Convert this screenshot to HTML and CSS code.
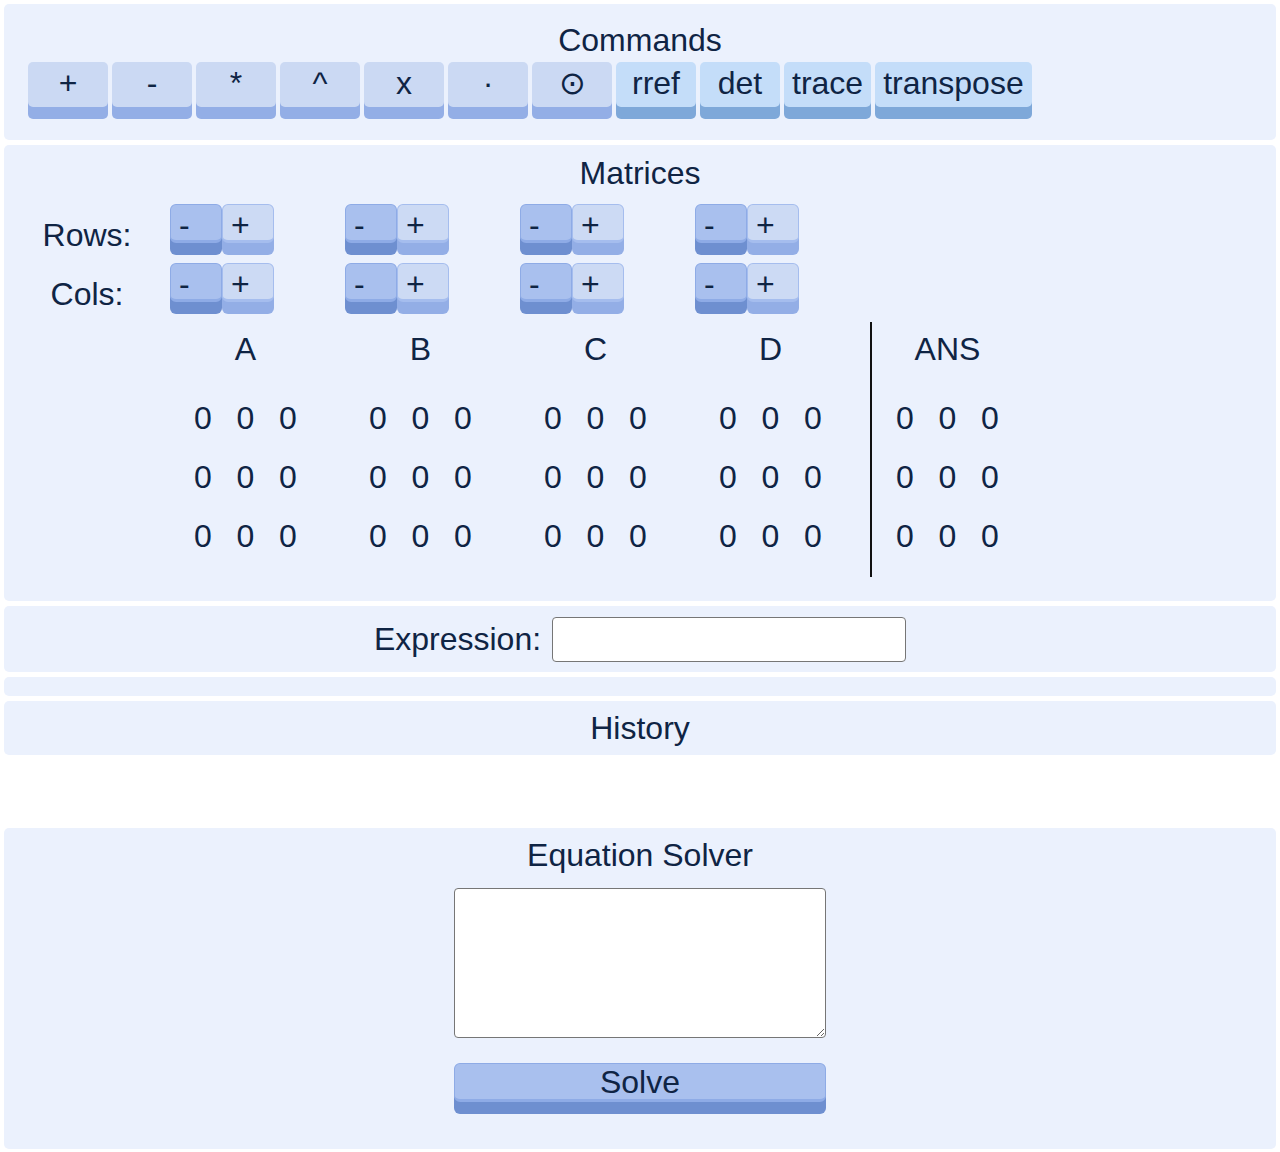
FILE: index.html
```html
<!DOCTYPE html>
<html lang="en">
<head>
<meta charset="utf-8">
<title>Matrix Calculator</title>
<link rel="stylesheet" href="styles.css">
</head>
<body>
<section class="panel commands">
  <h2 class="title">Commands</h2>
  <div class="cmd-row">
    <button class="cmd op">+</button>
    <button class="cmd op">-</button>
    <button class="cmd op">*</button>
    <button class="cmd op">^</button>
    <button class="cmd op">x</button>
    <button class="cmd op">·</button>
    <button class="cmd op">⊙</button>
    <button class="cmd fn">rref</button>
    <button class="cmd fn">det</button>
    <button class="cmd fn">trace</button>
    <button class="cmd fn">transpose</button>
  </div>
</section>

<section class="panel matrices">
  <h2 class="title">Matrices</h2>
  <div class="mat-layout">
    <div class="labels">
      <div class="lbl">Rows:</div>
      <div class="lbl">Cols:</div>
    </div>

    <div class="mcol">
      <div class="pair"><button class="sbtn minus">-</button><button class="sbtn plus">+</button></div>
      <div class="pair"><button class="sbtn minus">-</button><button class="sbtn plus">+</button></div>
      <div class="matrix">
        <div class="mname">A</div>
        <div class="mgrid">
          <span>0</span><span>0</span><span>0</span>
          <span>0</span><span>0</span><span>0</span>
          <span>0</span><span>0</span><span>0</span>
        </div>
      </div>
    </div>

    <div class="mcol">
      <div class="pair"><button class="sbtn minus">-</button><button class="sbtn plus">+</button></div>
      <div class="pair"><button class="sbtn minus">-</button><button class="sbtn plus">+</button></div>
      <div class="matrix">
        <div class="mname">B</div>
        <div class="mgrid">
          <span>0</span><span>0</span><span>0</span>
          <span>0</span><span>0</span><span>0</span>
          <span>0</span><span>0</span><span>0</span>
        </div>
      </div>
    </div>

    <div class="mcol">
      <div class="pair"><button class="sbtn minus">-</button><button class="sbtn plus">+</button></div>
      <div class="pair"><button class="sbtn minus">-</button><button class="sbtn plus">+</button></div>
      <div class="matrix">
        <div class="mname">C</div>
        <div class="mgrid">
          <span>0</span><span>0</span><span>0</span>
          <span>0</span><span>0</span><span>0</span>
          <span>0</span><span>0</span><span>0</span>
        </div>
      </div>
    </div>

    <div class="mcol">
      <div class="pair"><button class="sbtn minus">-</button><button class="sbtn plus">+</button></div>
      <div class="pair"><button class="sbtn minus">-</button><button class="sbtn plus">+</button></div>
      <div class="matrix">
        <div class="mname">D</div>
        <div class="mgrid">
          <span>0</span><span>0</span><span>0</span>
          <span>0</span><span>0</span><span>0</span>
          <span>0</span><span>0</span><span>0</span>
        </div>
      </div>
    </div>

    <div class="anscol">
      <div class="matrix ans">
        <div class="mname">ANS</div>
        <div class="mgrid">
          <span>0</span><span>0</span><span>0</span>
          <span>0</span><span>0</span><span>0</span>
          <span>0</span><span>0</span><span>0</span>
        </div>
      </div>
    </div>
  </div>
</section>

<section class="panel expression">
  <label class="expr-label" for="expr">Expression:</label>
  <input class="expr-input" id="expr" type="text">
</section>

<section class="panel result"></section>

<section class="panel history">
  <h2 class="title">History</h2>
</section>
<div class="history-list"></div>

<section class="panel solver">
  <h2 class="title">Equation Solver</h2>
  <textarea class="solver-input"></textarea>
  <button class="solve-btn">Solve</button>
</section>
</body>
</html>
```

FILE: styles.css
```css
html, body {
  background: #ffffff;
}
body {
  margin: 4px 4px 0;
  font-family: "Liberation Sans", Arial, Helvetica, sans-serif;
  font-size: 32px;
  color: #0f2444;
}
button, input, textarea {
  font-family: inherit;
  font-size: 32px;
  color: inherit;
}
.panel {
  background: #ebf1fd;
  border-radius: 5px;
  margin-bottom: 5px;
  box-sizing: border-box;
}
.title {
  margin: 0;
  font-size: 32px;
  font-weight: normal;
  line-height: 37px;
  text-align: center;
}

/* Commands */
.commands {
  padding: 18px 24px 33px;
}
.cmd-row {
  display: flex;
  gap: 4px;
  margin-top: 3px;
}
.cmd {
  box-sizing: border-box;
  height: 45px;
  min-width: 80px;
  padding: 3px 8px 5px;
  line-height: 37px;
  border: none;
  border-radius: 5px;
  text-align: center;
}
.cmd.op {
  background: #cbd9f3;
  box-shadow: 0 12px 0 #93aee6;
}
.cmd.fn {
  background: #c4ddf9;
  box-shadow: 0 12px 0 #7ea8d9;
}

/* Matrices */
.matrices {
  padding: 9.5px 0 24px;
}
.matrices .title {
  margin-bottom: 12.5px;
}
.mat-layout {
  display: flex;
}
.labels {
  width: 154px;
  box-sizing: border-box;
  padding-left: 12px;
}
.lbl {
  height: 59px;
  box-sizing: border-box;
  padding-top: 4px;
  line-height: 55px;
  text-align: center;
}
.mcol {
  width: 175px;
}
.pair {
  display: flex;
  height: 59px;
  padding-left: 12px;
}
.sbtn {
  box-sizing: border-box;
  width: 52px;
  height: 39px;
  padding: 5px 0 0 8px;
  line-height: 30px;
  text-align: left;
  border: 1px solid;
  border-bottom-width: 3px;
  border-radius: 6px;
}
.sbtn.minus {
  background: #a9c0ee;
  border-color: #8eabe6;
  box-shadow: 0 12px 0 #6e8fd0;
}
.sbtn.plus {
  background: #ccdaf4;
  border-color: #a5bdee;
  box-shadow: 0 12px 0 #93aee6;
}
.matrix {
  height: 255px;
  box-sizing: border-box;
}
.mname {
  height: 54px;
  line-height: 54px;
  text-align: center;
}
.mgrid {
  display: grid;
  grid-template-columns: repeat(3, 42.5px);
  grid-auto-rows: 59px;
  justify-content: center;
  margin-top: 12.5px;
  line-height: 59px;
  text-align: center;
}
.anscol {
  margin-left: 12px;
  padding-top: 118px;
}
.matrix.ans {
  width: 153px;
  border-left: 2px solid #111111;
}

/* Expression */
.expression {
  display: flex;
  justify-content: center;
  align-items: center;
  gap: 11px;
  padding: 11px 0 10px;
}
.expr-label {
  line-height: 37px;
}
.expr-input {
  box-sizing: border-box;
  width: 354px;
  height: 45px;
  margin: 0;
  padding: 0 4px;
  background: #ffffff;
  border: 1px solid #767676;
  border-radius: 4px;
}

.result {
  height: 19px;
}

.history {
  padding: 9px 0 8px;
}
.history-list {
  height: 63px;
  margin-bottom: 5px;
}

/* Solver */
.solver {
  padding: 9px 0 47px;
}
.solver .title {
  margin-bottom: 14px;
}
.solver-input {
  display: block;
  box-sizing: border-box;
  width: 372px;
  height: 150px;
  margin: 0 auto;
  background: #ffffff;
  border: 1px solid #767676;
  border-radius: 4px;
}
.solve-btn {
  display: block;
  box-sizing: border-box;
  width: 372px;
  height: 39px;
  margin: 25px auto 0;
  padding: 2px 0 1px;
  line-height: 32px;
  text-align: center;
  background: #a9c0ee;
  border: 1px solid #8eabe6;
  border-bottom-width: 3px;
  border-radius: 6px;
  box-shadow: 0 12px 0 #6e8fd0;
}
```
